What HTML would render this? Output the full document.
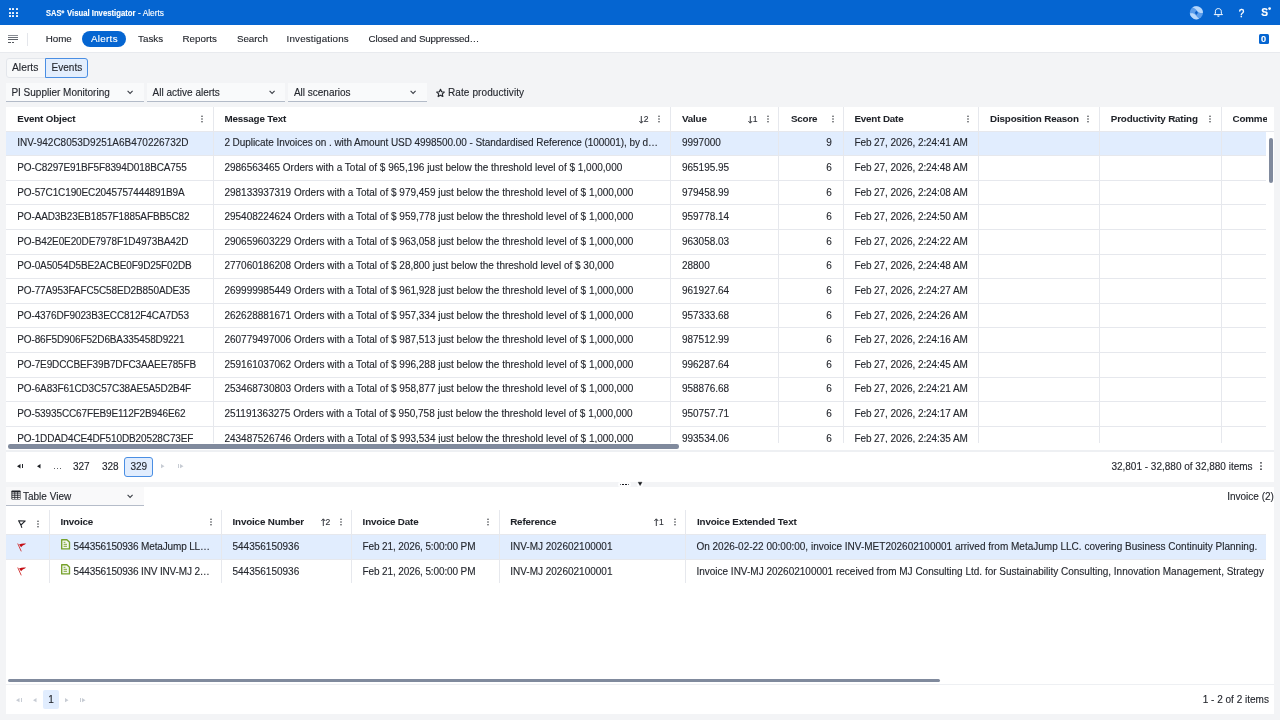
<!DOCTYPE html><html><head><meta charset="utf-8"><style>
html,body{margin:0;padding:0}
body{width:1280px;height:720px;overflow:hidden;position:relative;background:#F3F4F6;font-family:"Liberation Sans",sans-serif;color:#24272e}
.a{position:absolute}
.t{position:absolute;white-space:nowrap;-webkit-text-stroke:0.12px currentColor}
svg.a{overflow:visible}
</style></head><body><div id="root" style="position:absolute;left:0;top:0;width:1280px;height:720px;will-change:transform">
<div class="a" style="left:0px;top:0px;width:1280px;height:25px;background:#0565D1"></div>
<div class="a" style="left:8.9px;top:8.3px;width:2px;height:2px;background:#fff;border-radius:0.4px"></div>
<div class="a" style="left:8.9px;top:11.65px;width:2px;height:2px;background:#fff;border-radius:0.4px"></div>
<div class="a" style="left:8.9px;top:15.0px;width:2px;height:2px;background:#fff;border-radius:0.4px"></div>
<div class="a" style="left:12.3px;top:8.3px;width:2px;height:2px;background:#fff;border-radius:0.4px"></div>
<div class="a" style="left:12.3px;top:11.65px;width:2px;height:2px;background:#fff;border-radius:0.4px"></div>
<div class="a" style="left:12.3px;top:15.0px;width:2px;height:2px;background:#fff;border-radius:0.4px"></div>
<div class="a" style="left:15.7px;top:8.3px;width:2px;height:2px;background:#fff;border-radius:0.4px"></div>
<div class="a" style="left:15.7px;top:11.65px;width:2px;height:2px;background:#fff;border-radius:0.4px"></div>
<div class="a" style="left:15.7px;top:15.0px;width:2px;height:2px;background:#fff;border-radius:0.4px"></div>
<div class="t" style="top:5.68px;font-size:9.0px;line-height:14px;color:#fff;font-weight:bold;transform:scaleX(0.8322);transform-origin:0 0;left:45.50px;">SAS</div>
<svg class="a" style="left:61.2px;top:9.5px;" width="3.6" height="3.6" viewBox="0 0 3.6 3.6"><circle cx="1.8" cy="1.8" r="1.6" fill="#d8e6f8"/></svg>
<div class="t" style="top:5.68px;font-size:9.0px;line-height:14px;color:#fff;font-weight:bold;transform:scaleX(0.8578);transform-origin:0 0;left:66.80px;">Visual Investigator</div>
<div class="t" style="top:5.68px;font-size:9.0px;line-height:14px;color:#fff;transform:scaleX(0.9284);transform-origin:0 0;left:138.40px;">- Alerts</div>
<svg class="a" style="left:1189px;top:5px;" width="15" height="15" viewBox="0 0 15 15"><circle cx="7.4" cy="7.7" r="6.6" fill="#5B9DEB"/><path d="M3.4 2.6 A6.6 6.6 0 0 1 14.0 7.7 C12.0 8.4 9.8 7.6 8.5 6.2 C7.1 4.5 5.5 3.0 3.4 2.6Z" fill="#B7D7FB"/><path d="M0.8 8.6 A6.6 6.6 0 0 0 10.2 13.7 C8.8 13.0 7.6 11.6 6.5 10.1 C5.1 8.3 3.0 7.8 0.8 8.6Z" fill="#B7D7FB"/><path d="M7.4 5.7 L9.0 7.8 L7.4 9.9 L5.8 7.8Z" fill="#0B5FC8"/></svg>
<svg class="a" style="left:1213px;top:7px;" width="11" height="11" viewBox="0 0 11 11"><path d="M1.2 7.6 L2.4 6.3 L2.4 4.3 C2.4 2.6 3.6 1.6 5.35 1.6 C7.1 1.6 8.3 2.6 8.3 4.3 L8.3 6.3 L9.5 7.6 Z" fill="none" stroke="#fff" stroke-width="1" stroke-linejoin="round"/><path d="M4.1 8.5 A1.25 1.25 0 0 0 6.6 8.5 Z" fill="#fff"/></svg>
<div class="t" style="top:6.83px;font-size:10.0px;line-height:14px;color:#fff;-webkit-text-stroke:0.35px #fff;left:1238.80px;">?</div>
<div class="t" style="top:5.76px;font-size:10.2px;line-height:14px;color:#fff;font-weight:bold;left:1261.20px;">S</div>
<svg class="a" style="left:1267.5px;top:6.7px;" width="3.2" height="3.2" viewBox="0 0 3.2 3.2"><circle cx="1.6" cy="1.6" r="1.35" fill="#fff"/></svg>
<div class="a" style="left:0px;top:25px;width:1280px;height:27px;background:#fff"></div>
<div class="a" style="left:0px;top:51.9px;width:1280px;height:1px;background:#E8EAEE"></div>
<div class="a" style="left:8.1px;top:35.0px;width:9.5px;height:1px;background:#8a8d94"></div>
<div class="a" style="left:8.1px;top:37.0px;width:9.5px;height:1px;background:#6f737a"></div>
<div class="a" style="left:8.1px;top:39.0px;width:9.5px;height:1px;background:#5d6168"></div>
<div class="a" style="left:8.1px;top:41.8px;width:1.8px;height:1.1px;background:#55595f"></div>
<div class="a" style="left:10.4px;top:41.8px;width:1.1px;height:1.1px;background:#55595f"></div>
<div class="a" style="left:12.2px;top:41.8px;width:1.6px;height:1.1px;background:#55595f"></div>
<div class="a" style="left:27px;top:32.8px;width:1px;height:13.0px;background:#E4E6EB"></div>
<div class="t" style="top:31.80px;font-size:9.8px;line-height:14px;color:#24272e;left:45.70px;">Home</div>
<div class="a" style="left:82.3px;top:31px;width:43.8px;height:15.7px;background:#0565D1;border-radius:8px"></div>
<div class="t" style="top:31.80px;font-size:9.8px;line-height:14px;color:#fff;letter-spacing:0.3px;left:91.00px;">Alerts</div>
<div class="t" style="top:31.80px;font-size:9.8px;line-height:14px;color:#24272e;left:138.10px;">Tasks</div>
<div class="t" style="top:31.80px;font-size:9.8px;line-height:14px;color:#24272e;left:182.50px;">Reports</div>
<div class="t" style="top:31.80px;font-size:9.8px;line-height:14px;color:#24272e;left:236.90px;">Search</div>
<div class="t" style="top:31.80px;font-size:9.8px;line-height:14px;color:#24272e;letter-spacing:0.17px;left:286.60px;">Investigations</div>
<div class="t" style="top:31.80px;font-size:9.8px;line-height:14px;color:#24272e;letter-spacing:-0.17px;left:368.50px;">Closed and Suppressed…</div>
<div class="a" style="left:1258.5px;top:33.6px;width:10.5px;height:10.3px;background:#0565D1;border-radius:1.5px"></div>
<div class="t" style="top:32.01px;font-size:9.2px;line-height:14px;color:#fff;font-weight:bold;left:1261.00px;">0</div>
<div class="a" style="left:5.7px;top:58px;width:82px;height:19.8px;background:#F8F9FA;border:1px solid #E3E6EB;border-radius:3px;box-sizing:border-box"></div>
<div class="a" style="left:45px;top:58px;width:42.7px;height:19.8px;background:#E3EEFD;border:1px solid #4A8EE3;border-radius:0 3px 3px 0;box-sizing:border-box"></div>
<div class="t" style="top:61.23px;font-size:10.3px;line-height:14px;color:#24272e;left:12.00px;">Alerts</div>
<div class="t" style="top:61.33px;font-size:10px;line-height:14px;color:#24272e;left:51.60px;">Events</div>
<div class="a" style="left:5.7px;top:83.1px;width:138.3px;height:18px;background:#F9FAFB"></div>
<div class="a" style="left:5.7px;top:100.6px;width:138.3px;height:1.2px;background:#B3BBC8"></div>
<div class="t" style="top:85.93px;font-size:10px;line-height:14px;color:#24272e;left:11.40px;">PI Supplier Monitoring</div>
<svg class="a" style="left:127.4px;top:89.5px;" width="7" height="5" viewBox="0 0 7 5"><path d="M0.6 0.8 L3.1 3.4 L5.6 0.8" fill="none" stroke="#3c4048" stroke-width="1.1"/></svg>
<div class="a" style="left:146.9px;top:83.1px;width:138.29999999999998px;height:18px;background:#F9FAFB"></div>
<div class="a" style="left:146.9px;top:100.6px;width:138.29999999999998px;height:1.2px;background:#B3BBC8"></div>
<div class="t" style="top:85.93px;font-size:10px;line-height:14px;color:#24272e;left:152.60px;">All active alerts</div>
<svg class="a" style="left:268.6px;top:89.5px;" width="7" height="5" viewBox="0 0 7 5"><path d="M0.6 0.8 L3.1 3.4 L5.6 0.8" fill="none" stroke="#3c4048" stroke-width="1.1"/></svg>
<div class="a" style="left:288.2px;top:83.1px;width:138.40000000000003px;height:18px;background:#F9FAFB"></div>
<div class="a" style="left:288.2px;top:100.6px;width:138.40000000000003px;height:1.2px;background:#B3BBC8"></div>
<div class="t" style="top:85.93px;font-size:10px;line-height:14px;color:#24272e;left:293.90px;">All scenarios</div>
<svg class="a" style="left:410.0px;top:89.5px;" width="7" height="5" viewBox="0 0 7 5"><path d="M0.6 0.8 L3.1 3.4 L5.6 0.8" fill="none" stroke="#3c4048" stroke-width="1.1"/></svg>
<svg class="a" style="left:435.6px;top:88.6px;" width="9" height="9" viewBox="0 0 9 9"><path d="M4.50 0.30 L5.62 2.76 L8.30 3.06 L6.31 4.89 L6.85 7.54 L4.50 6.20 L2.15 7.54 L2.69 4.89 L0.70 3.06 L3.38 2.76Z" fill="none" stroke="#25282e" stroke-width="1.15" stroke-linejoin="round"/></svg>
<div class="t" style="top:86.13px;font-size:10px;line-height:14px;color:#24272e;letter-spacing:0.1px;left:448.00px;">Rate productivity</div>
<div class="a" style="left:5.7px;top:107px;width:1268.7px;height:374.7px;background:#fff"></div>
<div class="a" style="left:5.7px;top:131.1px;width:1260.7px;height:24.6px;background:#E1EDFE"></div>
<div class="a" style="left:5.7px;top:130.6px;width:1260.7px;height:1px;background:#E6E8ED"></div>
<div class="a" style="left:1266.4px;top:130.6px;width:8.0px;height:1px;background:#E6E8ED"></div>
<div class="a" style="left:5.7px;top:155.2px;width:1260.7px;height:1px;background:#E6E8ED"></div>
<div class="a" style="left:5.7px;top:179.8px;width:1260.7px;height:1px;background:#E6E8ED"></div>
<div class="a" style="left:5.7px;top:204.4px;width:1260.7px;height:1px;background:#E6E8ED"></div>
<div class="a" style="left:5.7px;top:229.0px;width:1260.7px;height:1px;background:#E6E8ED"></div>
<div class="a" style="left:5.7px;top:253.6px;width:1260.7px;height:1px;background:#E6E8ED"></div>
<div class="a" style="left:5.7px;top:278.20000000000005px;width:1260.7px;height:1px;background:#E6E8ED"></div>
<div class="a" style="left:5.7px;top:302.8px;width:1260.7px;height:1px;background:#E6E8ED"></div>
<div class="a" style="left:5.7px;top:327.4px;width:1260.7px;height:1px;background:#E6E8ED"></div>
<div class="a" style="left:5.7px;top:352.0px;width:1260.7px;height:1px;background:#E6E8ED"></div>
<div class="a" style="left:5.7px;top:376.6px;width:1260.7px;height:1px;background:#E6E8ED"></div>
<div class="a" style="left:5.7px;top:401.20000000000005px;width:1260.7px;height:1px;background:#E6E8ED"></div>
<div class="a" style="left:5.7px;top:425.80000000000007px;width:1260.7px;height:1px;background:#E6E8ED"></div>
<div class="a" style="left:213.0px;top:107px;width:1px;height:335.6px;background:#E6E8ED"></div>
<div class="a" style="left:670.0px;top:107px;width:1px;height:335.6px;background:#E6E8ED"></div>
<div class="a" style="left:778.25px;top:107px;width:1px;height:335.6px;background:#E6E8ED"></div>
<div class="a" style="left:842.8px;top:107px;width:1px;height:335.6px;background:#E6E8ED"></div>
<div class="a" style="left:978.4px;top:107px;width:1px;height:335.6px;background:#E6E8ED"></div>
<div class="a" style="left:1098.75px;top:107px;width:1px;height:335.6px;background:#E6E8ED"></div>
<div class="a" style="left:1220.9px;top:107px;width:1px;height:335.6px;background:#E6E8ED"></div>
<div class="t" style="top:112.40px;font-size:9.8px;line-height:14px;color:#1f2228;font-weight:bold;letter-spacing:-0.15px;-webkit-text-stroke:0.05px currentColor;left:17.25px;">Event Object</div>
<div class="t" style="top:112.40px;font-size:9.8px;line-height:14px;color:#1f2228;font-weight:bold;letter-spacing:-0.15px;-webkit-text-stroke:0.05px currentColor;left:224.40px;">Message Text</div>
<div class="t" style="top:112.40px;font-size:9.8px;line-height:14px;color:#1f2228;font-weight:bold;letter-spacing:-0.15px;-webkit-text-stroke:0.05px currentColor;left:681.90px;">Value</div>
<div class="t" style="top:112.40px;font-size:9.8px;line-height:14px;color:#1f2228;font-weight:bold;letter-spacing:-0.15px;-webkit-text-stroke:0.05px currentColor;left:790.90px;">Score</div>
<div class="t" style="top:112.40px;font-size:9.8px;line-height:14px;color:#1f2228;font-weight:bold;letter-spacing:-0.15px;-webkit-text-stroke:0.05px currentColor;left:854.40px;">Event Date</div>
<div class="t" style="top:112.40px;font-size:9.8px;line-height:14px;color:#1f2228;font-weight:bold;letter-spacing:-0.15px;-webkit-text-stroke:0.05px currentColor;left:990.00px;">Disposition Reason</div>
<div class="t" style="top:112.40px;font-size:9.8px;line-height:14px;color:#1f2228;font-weight:bold;letter-spacing:-0.15px;-webkit-text-stroke:0.05px currentColor;left:1110.75px;">Productivity Rating</div>
<div class="t" style="top:112.40px;font-size:9.8px;line-height:14px;color:#1f2228;font-weight:bold;letter-spacing:-0.15px;-webkit-text-stroke:0.05px currentColor;left:1232.50px;width:34px;overflow:hidden;">Comme</div>
<svg class="a" style="left:200.00px;top:114.20px" width="4" height="10" viewBox="0 0 4 10"><circle cx="2" cy="2.20" r="0.72" fill="#2a2d33"/><circle cx="2" cy="5.00" r="0.72" fill="#2a2d33"/><circle cx="2" cy="7.80" r="0.72" fill="#2a2d33"/></svg>
<svg class="a" style="left:657.30px;top:114.20px" width="4" height="10" viewBox="0 0 4 10"><circle cx="2" cy="2.20" r="0.72" fill="#2a2d33"/><circle cx="2" cy="5.00" r="0.72" fill="#2a2d33"/><circle cx="2" cy="7.80" r="0.72" fill="#2a2d33"/></svg>
<svg class="a" style="left:765.80px;top:114.20px" width="4" height="10" viewBox="0 0 4 10"><circle cx="2" cy="2.20" r="0.72" fill="#2a2d33"/><circle cx="2" cy="5.00" r="0.72" fill="#2a2d33"/><circle cx="2" cy="7.80" r="0.72" fill="#2a2d33"/></svg>
<svg class="a" style="left:830.60px;top:114.20px" width="4" height="10" viewBox="0 0 4 10"><circle cx="2" cy="2.20" r="0.72" fill="#2a2d33"/><circle cx="2" cy="5.00" r="0.72" fill="#2a2d33"/><circle cx="2" cy="7.80" r="0.72" fill="#2a2d33"/></svg>
<svg class="a" style="left:965.50px;top:114.20px" width="4" height="10" viewBox="0 0 4 10"><circle cx="2" cy="2.20" r="0.72" fill="#2a2d33"/><circle cx="2" cy="5.00" r="0.72" fill="#2a2d33"/><circle cx="2" cy="7.80" r="0.72" fill="#2a2d33"/></svg>
<svg class="a" style="left:1086.25px;top:114.20px" width="4" height="10" viewBox="0 0 4 10"><circle cx="2" cy="2.20" r="0.72" fill="#2a2d33"/><circle cx="2" cy="5.00" r="0.72" fill="#2a2d33"/><circle cx="2" cy="7.80" r="0.72" fill="#2a2d33"/></svg>
<svg class="a" style="left:1208.00px;top:114.20px" width="4" height="10" viewBox="0 0 4 10"><circle cx="2" cy="2.20" r="0.72" fill="#2a2d33"/><circle cx="2" cy="5.00" r="0.72" fill="#2a2d33"/><circle cx="2" cy="7.80" r="0.72" fill="#2a2d33"/></svg>
<svg class="a" style="left:638.8px;top:115.9px;" width="5" height="8" viewBox="0 0 5 8"><path d="M2.3 0 L2.3 6.8 M0.4 5.0 L2.3 7.2 L4.2 5.0" fill="none" stroke="#2b2e35" stroke-width="0.95"/></svg>
<div class="t" style="left:643.70px;top:114.30px;font-size:8.6px;line-height:10px;color:#2b2e35">2</div>
<svg class="a" style="left:747.9px;top:115.9px;" width="5" height="8" viewBox="0 0 5 8"><path d="M2.3 0 L2.3 6.8 M0.4 5.0 L2.3 7.2 L4.2 5.0" fill="none" stroke="#2b2e35" stroke-width="0.95"/></svg>
<div class="t" style="left:752.80px;top:114.30px;font-size:8.6px;line-height:10px;color:#2b2e35">1</div>
<div class="a" style="left:0;top:0;width:1280px;height:443px;overflow:hidden">
<div class="t" style="top:136.33px;font-size:10px;line-height:14px;color:#24272e;left:17.25px;">INV-942C8053D9251A6B470226732D</div>
<div class="t" style="top:136.33px;font-size:10px;line-height:14px;color:#24272e;letter-spacing:-0.065px;left:224.40px;">2 Duplicate Invoices on . with Amount USD 4998500.00 - Standardised Reference (100001), by d…</div>
<div class="t" style="top:136.33px;font-size:10px;line-height:14px;color:#24272e;left:681.90px;">9997000</div>
<div class="t" style="top:136.33px;font-size:10px;line-height:14px;color:#24272e;right:448.20px;">9</div>
<div class="t" style="top:136.33px;font-size:10px;line-height:14px;color:#24272e;letter-spacing:-0.07px;left:854.40px;">Feb 27, 2026, 2:24:41 AM</div>
<div class="t" style="top:160.93px;font-size:10px;line-height:14px;color:#24272e;letter-spacing:-0.12px;left:17.25px;">PO-C8297E91BF5F8394D018BCA755</div>
<div class="t" style="top:160.93px;font-size:10px;line-height:14px;color:#24272e;left:224.40px;">2986563465 Orders with a Total of $ 965,196 just below the threshold level of $ 1,000,000</div>
<div class="t" style="top:160.93px;font-size:10px;line-height:14px;color:#24272e;left:681.90px;">965195.95</div>
<div class="t" style="top:160.93px;font-size:10px;line-height:14px;color:#24272e;right:448.20px;">6</div>
<div class="t" style="top:160.93px;font-size:10px;line-height:14px;color:#24272e;letter-spacing:-0.07px;left:854.40px;">Feb 27, 2026, 2:24:48 AM</div>
<div class="t" style="top:185.53px;font-size:10px;line-height:14px;color:#24272e;letter-spacing:-0.12px;left:17.25px;">PO-57C1C190EC2045757444891B9A</div>
<div class="t" style="top:185.53px;font-size:10px;line-height:14px;color:#24272e;left:224.40px;">298133937319 Orders with a Total of $ 979,459 just below the threshold level of $ 1,000,000</div>
<div class="t" style="top:185.53px;font-size:10px;line-height:14px;color:#24272e;left:681.90px;">979458.99</div>
<div class="t" style="top:185.53px;font-size:10px;line-height:14px;color:#24272e;right:448.20px;">6</div>
<div class="t" style="top:185.53px;font-size:10px;line-height:14px;color:#24272e;letter-spacing:-0.07px;left:854.40px;">Feb 27, 2026, 2:24:08 AM</div>
<div class="t" style="top:210.13px;font-size:10px;line-height:14px;color:#24272e;letter-spacing:-0.12px;left:17.25px;">PO-AAD3B23EB1857F1885AFBB5C82</div>
<div class="t" style="top:210.13px;font-size:10px;line-height:14px;color:#24272e;left:224.40px;">295408224624 Orders with a Total of $ 959,778 just below the threshold level of $ 1,000,000</div>
<div class="t" style="top:210.13px;font-size:10px;line-height:14px;color:#24272e;left:681.90px;">959778.14</div>
<div class="t" style="top:210.13px;font-size:10px;line-height:14px;color:#24272e;right:448.20px;">6</div>
<div class="t" style="top:210.13px;font-size:10px;line-height:14px;color:#24272e;letter-spacing:-0.07px;left:854.40px;">Feb 27, 2026, 2:24:50 AM</div>
<div class="t" style="top:234.73px;font-size:10px;line-height:14px;color:#24272e;letter-spacing:-0.12px;left:17.25px;">PO-B42E0E20DE7978F1D4973BA42D</div>
<div class="t" style="top:234.73px;font-size:10px;line-height:14px;color:#24272e;left:224.40px;">290659603229 Orders with a Total of $ 963,058 just below the threshold level of $ 1,000,000</div>
<div class="t" style="top:234.73px;font-size:10px;line-height:14px;color:#24272e;left:681.90px;">963058.03</div>
<div class="t" style="top:234.73px;font-size:10px;line-height:14px;color:#24272e;right:448.20px;">6</div>
<div class="t" style="top:234.73px;font-size:10px;line-height:14px;color:#24272e;letter-spacing:-0.07px;left:854.40px;">Feb 27, 2026, 2:24:22 AM</div>
<div class="t" style="top:259.33px;font-size:10px;line-height:14px;color:#24272e;letter-spacing:-0.12px;left:17.25px;">PO-0A5054D5BE2ACBE0F9D25F02DB</div>
<div class="t" style="top:259.33px;font-size:10px;line-height:14px;color:#24272e;left:224.40px;">277060186208 Orders with a Total of $ 28,800 just below the threshold level of $ 30,000</div>
<div class="t" style="top:259.33px;font-size:10px;line-height:14px;color:#24272e;left:681.90px;">28800</div>
<div class="t" style="top:259.33px;font-size:10px;line-height:14px;color:#24272e;right:448.20px;">6</div>
<div class="t" style="top:259.33px;font-size:10px;line-height:14px;color:#24272e;letter-spacing:-0.07px;left:854.40px;">Feb 27, 2026, 2:24:48 AM</div>
<div class="t" style="top:283.93px;font-size:10px;line-height:14px;color:#24272e;letter-spacing:-0.12px;left:17.25px;">PO-77A953FAFC5C58ED2B850ADE35</div>
<div class="t" style="top:283.93px;font-size:10px;line-height:14px;color:#24272e;left:224.40px;">269999985449 Orders with a Total of $ 961,928 just below the threshold level of $ 1,000,000</div>
<div class="t" style="top:283.93px;font-size:10px;line-height:14px;color:#24272e;left:681.90px;">961927.64</div>
<div class="t" style="top:283.93px;font-size:10px;line-height:14px;color:#24272e;right:448.20px;">6</div>
<div class="t" style="top:283.93px;font-size:10px;line-height:14px;color:#24272e;letter-spacing:-0.07px;left:854.40px;">Feb 27, 2026, 2:24:27 AM</div>
<div class="t" style="top:308.53px;font-size:10px;line-height:14px;color:#24272e;letter-spacing:-0.12px;left:17.25px;">PO-4376DF9023B3ECC812F4CA7D53</div>
<div class="t" style="top:308.53px;font-size:10px;line-height:14px;color:#24272e;left:224.40px;">262628881671 Orders with a Total of $ 957,334 just below the threshold level of $ 1,000,000</div>
<div class="t" style="top:308.53px;font-size:10px;line-height:14px;color:#24272e;left:681.90px;">957333.68</div>
<div class="t" style="top:308.53px;font-size:10px;line-height:14px;color:#24272e;right:448.20px;">6</div>
<div class="t" style="top:308.53px;font-size:10px;line-height:14px;color:#24272e;letter-spacing:-0.07px;left:854.40px;">Feb 27, 2026, 2:24:26 AM</div>
<div class="t" style="top:333.13px;font-size:10px;line-height:14px;color:#24272e;letter-spacing:-0.12px;left:17.25px;">PO-86F5D906F52D6BA335458D9221</div>
<div class="t" style="top:333.13px;font-size:10px;line-height:14px;color:#24272e;left:224.40px;">260779497006 Orders with a Total of $ 987,513 just below the threshold level of $ 1,000,000</div>
<div class="t" style="top:333.13px;font-size:10px;line-height:14px;color:#24272e;left:681.90px;">987512.99</div>
<div class="t" style="top:333.13px;font-size:10px;line-height:14px;color:#24272e;right:448.20px;">6</div>
<div class="t" style="top:333.13px;font-size:10px;line-height:14px;color:#24272e;letter-spacing:-0.07px;left:854.40px;">Feb 27, 2026, 2:24:16 AM</div>
<div class="t" style="top:357.73px;font-size:10px;line-height:14px;color:#24272e;letter-spacing:-0.12px;left:17.25px;">PO-7E9DCCBEF39B7DFC3AAEE785FB</div>
<div class="t" style="top:357.73px;font-size:10px;line-height:14px;color:#24272e;left:224.40px;">259161037062 Orders with a Total of $ 996,288 just below the threshold level of $ 1,000,000</div>
<div class="t" style="top:357.73px;font-size:10px;line-height:14px;color:#24272e;left:681.90px;">996287.64</div>
<div class="t" style="top:357.73px;font-size:10px;line-height:14px;color:#24272e;right:448.20px;">6</div>
<div class="t" style="top:357.73px;font-size:10px;line-height:14px;color:#24272e;letter-spacing:-0.07px;left:854.40px;">Feb 27, 2026, 2:24:45 AM</div>
<div class="t" style="top:382.33px;font-size:10px;line-height:14px;color:#24272e;letter-spacing:-0.12px;left:17.25px;">PO-6A83F61CD3C57C38AE5A5D2B4F</div>
<div class="t" style="top:382.33px;font-size:10px;line-height:14px;color:#24272e;left:224.40px;">253468730803 Orders with a Total of $ 958,877 just below the threshold level of $ 1,000,000</div>
<div class="t" style="top:382.33px;font-size:10px;line-height:14px;color:#24272e;left:681.90px;">958876.68</div>
<div class="t" style="top:382.33px;font-size:10px;line-height:14px;color:#24272e;right:448.20px;">6</div>
<div class="t" style="top:382.33px;font-size:10px;line-height:14px;color:#24272e;letter-spacing:-0.07px;left:854.40px;">Feb 27, 2026, 2:24:21 AM</div>
<div class="t" style="top:406.93px;font-size:10px;line-height:14px;color:#24272e;letter-spacing:-0.12px;left:17.25px;">PO-53935CC67FEB9E112F2B946E62</div>
<div class="t" style="top:406.93px;font-size:10px;line-height:14px;color:#24272e;left:224.40px;">251191363275 Orders with a Total of $ 950,758 just below the threshold level of $ 1,000,000</div>
<div class="t" style="top:406.93px;font-size:10px;line-height:14px;color:#24272e;left:681.90px;">950757.71</div>
<div class="t" style="top:406.93px;font-size:10px;line-height:14px;color:#24272e;right:448.20px;">6</div>
<div class="t" style="top:406.93px;font-size:10px;line-height:14px;color:#24272e;letter-spacing:-0.07px;left:854.40px;">Feb 27, 2026, 2:24:17 AM</div>
<div class="t" style="top:431.53px;font-size:10px;line-height:14px;color:#24272e;letter-spacing:-0.12px;left:17.25px;">PO-1DDAD4CE4DF510DB20528C73EF</div>
<div class="t" style="top:431.53px;font-size:10px;line-height:14px;color:#24272e;left:224.40px;">243487526746 Orders with a Total of $ 993,534 just below the threshold level of $ 1,000,000</div>
<div class="t" style="top:431.53px;font-size:10px;line-height:14px;color:#24272e;left:681.90px;">993534.06</div>
<div class="t" style="top:431.53px;font-size:10px;line-height:14px;color:#24272e;right:448.20px;">6</div>
<div class="t" style="top:431.53px;font-size:10px;line-height:14px;color:#24272e;letter-spacing:-0.07px;left:854.40px;">Feb 27, 2026, 2:24:35 AM</div>
</div>
<div class="a" style="left:1268.5px;top:137.8px;width:4px;height:44.8px;background:#808A9D;border-radius:2px"></div>
<div class="a" style="left:7.8px;top:444.4px;width:670.8px;height:4.3px;background:#808A9D;border-radius:2.2px"></div>
<div class="a" style="left:5.7px;top:450px;width:1268.7px;height:1.6px;background:#EEF0F3"></div>
<svg class="a" style="left:17.4px;top:463.6px;" width="3.5" height="4.5" viewBox="0 0 3.5 4.5"><path d="M3.5 0 L0 2.25 L3.5 4.5Z" fill="#1e2126"/></svg>
<div class="a" style="left:22.4px;top:463.7px;width:1.0px;height:4.4px;background:#1e2126"></div>
<svg class="a" style="left:37.0px;top:463.6px;" width="3.5" height="4.5" viewBox="0 0 3.5 4.5"><path d="M3.5 0 L0 2.25 L3.5 4.5Z" fill="#1e2126"/></svg>
<div class="a" style="left:54.0px;top:468.1px;width:1.2px;height:1.2px;background:#2b2e35;border-radius:50%"></div>
<div class="a" style="left:57.0px;top:468.1px;width:1.2px;height:1.2px;background:#2b2e35;border-radius:50%"></div>
<div class="a" style="left:59.8px;top:468.1px;width:1.2px;height:1.2px;background:#2b2e35;border-radius:50%"></div>
<div class="t" style="top:459.83px;font-size:10px;line-height:14px;color:#24272e;left:73.00px;">327</div>
<div class="t" style="top:459.83px;font-size:10px;line-height:14px;color:#24272e;left:101.90px;">328</div>
<div class="a" style="left:124.2px;top:456.6px;width:28.5px;height:20px;background:#E1EDFE;border:1px solid #4A8EE3;border-radius:3px;box-sizing:border-box"></div>
<div class="t" style="top:459.83px;font-size:10px;line-height:14px;color:#24272e;left:130.50px;">329</div>
<svg class="a" style="left:161px;top:463.7px;" width="3.5" height="4.3" viewBox="0 0 3.5 4.3"><path d="M0 0 L3.5 2.15 L0 4.3Z" fill="#C7CCD4"/></svg>
<div class="a" style="left:178.2px;top:463.7px;width:0.9px;height:4.3px;background:#C7CCD4"></div>
<svg class="a" style="left:179.6px;top:463.7px;" width="3.5" height="4.3" viewBox="0 0 3.5 4.3"><path d="M0 0 L3.5 2.15 L0 4.3Z" fill="#C7CCD4"/></svg>
<div class="t" style="top:460.43px;font-size:10px;line-height:14px;color:#24272e;right:27.40px;">32,801 - 32,880 of 32,880 items</div>
<svg class="a" style="left:1259.20px;top:461.20px" width="4" height="10" viewBox="0 0 4 10"><circle cx="2" cy="1.80" r="0.85" fill="#2b2e35"/><circle cx="2" cy="5.00" r="0.85" fill="#2b2e35"/><circle cx="2" cy="8.20" r="0.85" fill="#2b2e35"/></svg>
<div class="a" style="left:618.0px;top:482.4px;width:12.6px;height:4.4px;background:#fdfdfe;border-radius:2px"></div>
<div class="a" style="left:637.0px;top:481.9px;width:5.8px;height:4.9px;background:#fdfdfe;border-radius:2px"></div>
<div class="a" style="left:620px;top:484px;width:1px;height:1.2px;background:#6a6d73"></div>
<div class="a" style="left:622px;top:484px;width:1.6px;height:1.2px;background:#15171b"></div>
<div class="a" style="left:625px;top:484px;width:1.6px;height:1.2px;background:#15171b"></div>
<div class="a" style="left:628px;top:484px;width:1px;height:1.2px;background:#6a6d73"></div>
<svg class="a" style="left:638.0px;top:482.1px;" width="4.2" height="3.8" viewBox="0 0 4.2 3.8"><path d="M0.2 0.2 L4.0 0.2 L2.1 3.6Z" fill="#15171b" stroke="#15171b" stroke-width="0.4" stroke-linejoin="round"/></svg>
<div class="a" style="left:5.7px;top:487.2px;width:1268.7px;height:227.00000000000006px;background:#fff"></div>
<div class="a" style="left:5.7px;top:487.2px;width:138.3px;height:17.80000000000001px;background:#F9F9FA"></div>
<div class="a" style="left:5.7px;top:505px;width:138.3px;height:1px;background:#B5BCC9"></div>
<svg class="a" style="left:10.8px;top:490.2px;" width="10" height="10" viewBox="0 0 10 10"><rect x="0.4" y="0.4" width="9.2" height="9.2" rx="0.8" fill="#1f2228"/><rect x="1.30" y="2.40" width="2.1" height="1.1" fill="#F9F9FA"/><rect x="1.30" y="4.25" width="2.1" height="1.1" fill="#F9F9FA"/><rect x="1.30" y="6.10" width="2.1" height="1.1" fill="#F9F9FA"/><rect x="1.30" y="7.95" width="2.1" height="1.1" fill="#F9F9FA"/><rect x="4.20" y="2.40" width="2.1" height="1.1" fill="#F9F9FA"/><rect x="4.20" y="4.25" width="2.1" height="1.1" fill="#F9F9FA"/><rect x="4.20" y="6.10" width="2.1" height="1.1" fill="#F9F9FA"/><rect x="4.20" y="7.95" width="2.1" height="1.1" fill="#F9F9FA"/><rect x="7.10" y="2.40" width="2.1" height="1.1" fill="#F9F9FA"/><rect x="7.10" y="4.25" width="2.1" height="1.1" fill="#F9F9FA"/><rect x="7.10" y="6.10" width="2.1" height="1.1" fill="#F9F9FA"/><rect x="7.10" y="7.95" width="2.1" height="1.1" fill="#F9F9FA"/></svg>
<div class="t" style="top:490.28px;font-size:10px;line-height:14px;color:#24272e;left:23.00px;">Table View</div>
<svg class="a" style="left:127px;top:493.6px;" width="7" height="5" viewBox="0 0 7 5"><path d="M0.6 0.8 L3.1 3.4 L5.6 0.8" fill="none" stroke="#3c4048" stroke-width="1.1"/></svg>
<div class="t" style="top:489.93px;font-size:10px;line-height:14px;color:#24272e;right:6.10px;">Invoice (2)</div>
<div class="a" style="left:5.7px;top:534.7px;width:1260.8px;height:24.4px;background:#E1EDFE"></div>
<div class="a" style="left:5.7px;top:534.2px;width:1260.8px;height:1px;background:#E6E8ED"></div>
<div class="a" style="left:5.7px;top:558.6px;width:1260.8px;height:1px;background:#E6E8ED"></div>
<div class="a" style="left:49.0px;top:510.3px;width:1px;height:72.30000000000001px;background:#E6E8ED"></div>
<div class="a" style="left:220.9px;top:510.3px;width:1px;height:72.30000000000001px;background:#E6E8ED"></div>
<div class="a" style="left:351.1px;top:510.3px;width:1px;height:72.30000000000001px;background:#E6E8ED"></div>
<div class="a" style="left:499.1px;top:510.3px;width:1px;height:72.30000000000001px;background:#E6E8ED"></div>
<div class="a" style="left:685.2px;top:510.3px;width:1px;height:72.30000000000001px;background:#E6E8ED"></div>
<div class="t" style="top:514.80px;font-size:9.8px;line-height:14px;color:#1f2228;font-weight:bold;letter-spacing:-0.15px;-webkit-text-stroke:0.05px currentColor;left:60.40px;">Invoice</div>
<div class="t" style="top:514.80px;font-size:9.8px;line-height:14px;color:#1f2228;font-weight:bold;letter-spacing:-0.15px;-webkit-text-stroke:0.05px currentColor;left:232.50px;">Invoice Number</div>
<div class="t" style="top:514.80px;font-size:9.8px;line-height:14px;color:#1f2228;font-weight:bold;letter-spacing:-0.15px;-webkit-text-stroke:0.05px currentColor;left:362.60px;">Invoice Date</div>
<div class="t" style="top:514.80px;font-size:9.8px;line-height:14px;color:#1f2228;font-weight:bold;letter-spacing:-0.15px;-webkit-text-stroke:0.05px currentColor;left:510.20px;">Reference</div>
<div class="t" style="top:514.80px;font-size:9.8px;line-height:14px;color:#1f2228;font-weight:bold;letter-spacing:-0.15px;-webkit-text-stroke:0.05px currentColor;left:697.00px;">Invoice Extended Text</div>
<svg class="a" style="left:36.10px;top:518.80px" width="4" height="10" viewBox="0 0 4 10"><circle cx="2" cy="2.20" r="0.72" fill="#2a2d33"/><circle cx="2" cy="5.00" r="0.72" fill="#2a2d33"/><circle cx="2" cy="7.80" r="0.72" fill="#2a2d33"/></svg>
<svg class="a" style="left:209.00px;top:516.90px" width="4" height="10" viewBox="0 0 4 10"><circle cx="2" cy="2.20" r="0.72" fill="#2a2d33"/><circle cx="2" cy="5.00" r="0.72" fill="#2a2d33"/><circle cx="2" cy="7.80" r="0.72" fill="#2a2d33"/></svg>
<svg class="a" style="left:338.60px;top:516.90px" width="4" height="10" viewBox="0 0 4 10"><circle cx="2" cy="2.20" r="0.72" fill="#2a2d33"/><circle cx="2" cy="5.00" r="0.72" fill="#2a2d33"/><circle cx="2" cy="7.80" r="0.72" fill="#2a2d33"/></svg>
<svg class="a" style="left:485.80px;top:516.90px" width="4" height="10" viewBox="0 0 4 10"><circle cx="2" cy="2.20" r="0.72" fill="#2a2d33"/><circle cx="2" cy="5.00" r="0.72" fill="#2a2d33"/><circle cx="2" cy="7.80" r="0.72" fill="#2a2d33"/></svg>
<svg class="a" style="left:672.60px;top:516.90px" width="4" height="10" viewBox="0 0 4 10"><circle cx="2" cy="2.20" r="0.72" fill="#2a2d33"/><circle cx="2" cy="5.00" r="0.72" fill="#2a2d33"/><circle cx="2" cy="7.80" r="0.72" fill="#2a2d33"/></svg>
<svg class="a" style="left:320.7px;top:518.2px;" width="5" height="8" viewBox="0 0 5 8"><path d="M2.3 8 L2.3 1.2 M0.4 3.0 L2.3 0.8 L4.2 3.0" fill="none" stroke="#2b2e35" stroke-width="0.95"/></svg>
<div class="t" style="left:325.60px;top:516.60px;font-size:8.6px;line-height:10px;color:#2b2e35">2</div>
<svg class="a" style="left:654.0px;top:518.2px;" width="5" height="8" viewBox="0 0 5 8"><path d="M2.3 8 L2.3 1.2 M0.4 3.0 L2.3 0.8 L4.2 3.0" fill="none" stroke="#2b2e35" stroke-width="0.95"/></svg>
<div class="t" style="left:658.90px;top:516.60px;font-size:8.6px;line-height:10px;color:#2b2e35">1</div>
<svg class="a" style="left:17.5px;top:519.5px;" width="9" height="9" viewBox="0 0 9 9"><path d="M0.6 0.8 L7.3 0.9 L2.9 5.0 Z M2.9 5.0 L3.9 7.9" fill="none" stroke="#1f2228" stroke-width="1.05" stroke-linejoin="round"/></svg>
<div class="a" style="left:0;top:0;width:1266.5px;height:720px;overflow:hidden">
<svg class="a" style="left:16.5px;top:542.6px;" width="10" height="9" viewBox="0 0 10 9"><path d="M0.9 0.9 L4.1 8.0" stroke="#D23A3A" stroke-width="0.95" fill="none" stroke-linecap="round"/><path d="M2.0 1.5 C4.4 0.6 6.9 0.3 9.2 0.8 C7.8 1.7 6.2 2.2 5.3 2.9 C4.6 3.4 4.3 3.9 4.1 4.3 Z" fill="#C40F16"/></svg>
<svg class="a" style="left:60.8px;top:539.2px;" width="9.2" height="10.6" viewBox="0 0 9.2 10.6"><path d="M0.7 0.7 L5.9 0.7 L8.5 3.3 L8.5 9.9 L0.7 9.9 Z" fill="#F4F8F0" stroke="#76A12B" stroke-width="1.35" stroke-linejoin="round"/><path d="M2.6 3.3 L4.4 3.3 M2.6 5.3 L6.0 5.3 M2.6 7.3 L6.0 7.3" stroke="#76A12B" stroke-width="0.95"/></svg>
<div class="t" style="top:540.23px;font-size:10px;line-height:14px;color:#24272e;letter-spacing:-0.15px;left:73.50px;">544356150936 MetaJump LL…</div>
<div class="t" style="top:540.23px;font-size:10px;line-height:14px;color:#24272e;left:232.50px;">544356150936</div>
<div class="t" style="top:540.23px;font-size:10px;line-height:14px;color:#24272e;letter-spacing:-0.12px;left:362.60px;">Feb 21, 2026, 5:00:00 PM</div>
<div class="t" style="top:540.23px;font-size:10px;line-height:14px;color:#24272e;left:510.20px;">INV-MJ 202602100001</div>
<div class="t" style="top:540.23px;font-size:10px;line-height:14px;color:#24272e;left:696.40px;">On 2026-02-22 00:00:00, invoice INV-MET202602100001 arrived from MetaJump LLC. covering Business Continuity Planning.</div>
<svg class="a" style="left:16.5px;top:567.0px;" width="10" height="9" viewBox="0 0 10 9"><path d="M0.9 0.9 L4.1 8.0" stroke="#D23A3A" stroke-width="0.95" fill="none" stroke-linecap="round"/><path d="M2.0 1.5 C4.4 0.6 6.9 0.3 9.2 0.8 C7.8 1.7 6.2 2.2 5.3 2.9 C4.6 3.4 4.3 3.9 4.1 4.3 Z" fill="#C40F16"/></svg>
<svg class="a" style="left:60.8px;top:563.6px;" width="9.2" height="10.6" viewBox="0 0 9.2 10.6"><path d="M0.7 0.7 L5.9 0.7 L8.5 3.3 L8.5 9.9 L0.7 9.9 Z" fill="#F4F8F0" stroke="#76A12B" stroke-width="1.35" stroke-linejoin="round"/><path d="M2.6 3.3 L4.4 3.3 M2.6 5.3 L6.0 5.3 M2.6 7.3 L6.0 7.3" stroke="#76A12B" stroke-width="0.95"/></svg>
<div class="t" style="top:565.13px;font-size:10px;line-height:14px;color:#24272e;letter-spacing:-0.15px;left:73.50px;">544356150936 INV INV-MJ 2…</div>
<div class="t" style="top:565.13px;font-size:10px;line-height:14px;color:#24272e;left:232.50px;">544356150936</div>
<div class="t" style="top:565.13px;font-size:10px;line-height:14px;color:#24272e;letter-spacing:-0.12px;left:362.60px;">Feb 21, 2026, 5:00:00 PM</div>
<div class="t" style="top:565.13px;font-size:10px;line-height:14px;color:#24272e;left:510.20px;">INV-MJ 202602100001</div>
<div class="t" style="top:565.13px;font-size:10px;line-height:14px;color:#24272e;left:696.40px;">Invoice INV-MJ 202602100001 received from MJ Consulting Ltd. for Sustainability Consulting, Innovation Management, Strategy Development</div>
</div>
<div class="a" style="left:7.75px;top:678.5px;width:932.25px;height:3.8px;background:#808A9D;border-radius:2px"></div>
<div class="a" style="left:5.7px;top:684px;width:1268.7px;height:1.2px;background:#EEF0F3"></div>
<svg class="a" style="left:16.3px;top:697.6px;" width="3.5" height="4.3" viewBox="0 0 3.5 4.3"><path d="M3.5 0 L0 2.15 L3.5 4.3Z" fill="#C7CCD4"/></svg>
<div class="a" style="left:21.0px;top:697.6px;width:0.9px;height:4.3px;background:#C7CCD4"></div>
<svg class="a" style="left:32.8px;top:697.6px;" width="3.5" height="4.3" viewBox="0 0 3.5 4.3"><path d="M3.5 0 L0 2.15 L3.5 4.3Z" fill="#C7CCD4"/></svg>
<div class="a" style="left:43px;top:690.4px;width:15.75px;height:18.35px;background:#E1EDFE;border-radius:2px"></div>
<div class="t" style="top:693.33px;font-size:10px;line-height:14px;color:#1f2228;left:48.20px;">1</div>
<svg class="a" style="left:65px;top:697.6px;" width="3.5" height="4.3" viewBox="0 0 3.5 4.3"><path d="M0 0 L3.5 2.15 L0 4.3Z" fill="#C7CCD4"/></svg>
<div class="a" style="left:79.8px;top:697.6px;width:0.9px;height:4.3px;background:#C7CCD4"></div>
<svg class="a" style="left:81.6px;top:697.6px;" width="3.5" height="4.3" viewBox="0 0 3.5 4.3"><path d="M0 0 L3.5 2.15 L0 4.3Z" fill="#C7CCD4"/></svg>
<div class="t" style="top:692.93px;font-size:10px;line-height:14px;color:#24272e;right:11.10px;">1 - 2 of 2 items</div>
</div></body></html>
